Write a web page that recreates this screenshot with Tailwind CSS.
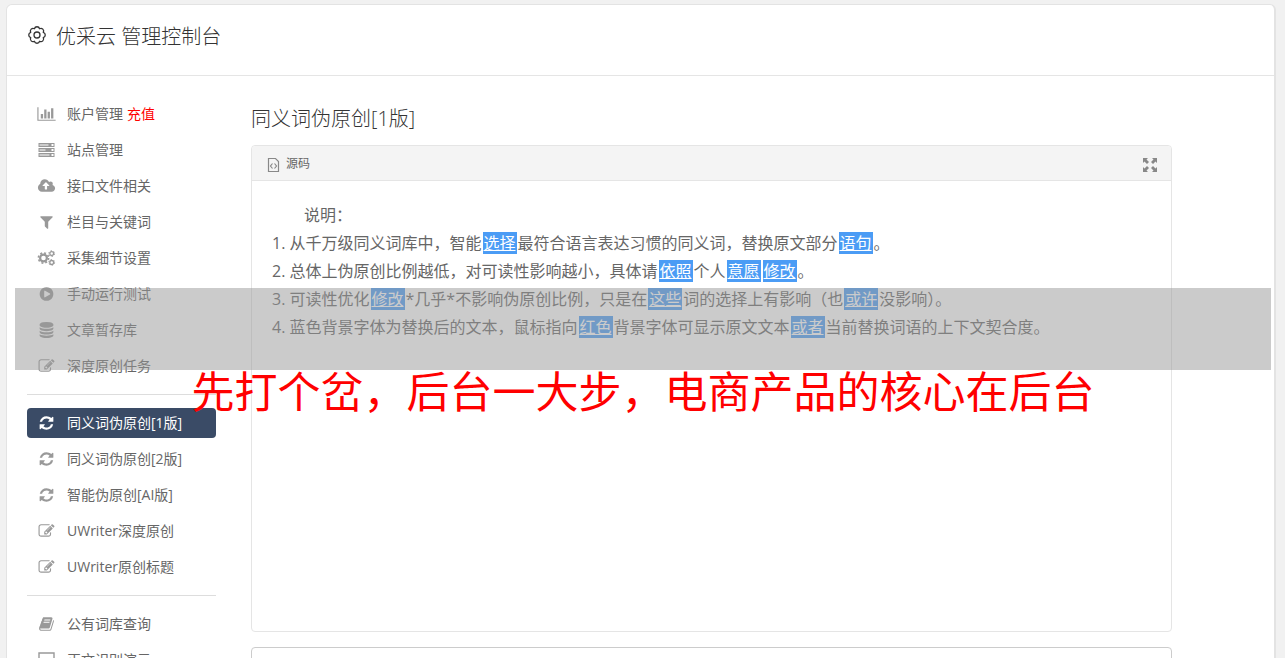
<!DOCTYPE html>
<html lang="zh-CN">

<head>
    <meta charset="utf-8">
    <title>优采云 管理控制台</title>
    <script src="https://cdn.jsdelivr.net/npm/@tailwindcss/browser@4"></script>
</head>

<body class="relative h-screen overflow-hidden bg-[#f1f1f1] px-[6px] pt-1 font-['Open_Sans','Noto_Sans_CJK_SC',sans-serif] text-[#666]">

    <!-- icon sprites -->
    <svg class="hidden">
        <symbol id="chart" viewBox="0 0 2048 1792"><path d="M640 896v512h-256v-512h256zm384-512v1024h-256v-1024h256zm1024 1152v128h-2048v-1536h128v1408h1920zm-640-896v768h-256v-768h256zm384-384v1152h-256v-1152h256z"/></symbol>
        <symbol id="server" viewBox="0 0 18 16"><path fill-rule="evenodd" d="M1 1h16v4H1zM2 2.600v.8h9v-.8zM14 2v2h2v-2zM1 6h16v4H1zM2 7.600v.8h6v-.8zM14 7v2h2v-2zM1 11h16v4H1zM2 12.600v.8h10v-.8zM14 12v2h2v-2z"/></symbol>
        <symbol id="upload" viewBox="-64 0 1920 1792"><path d="M1216 864q0-14-9-23l-352-352q-9-9-23-9t-23 9l-351 351q-10 12-10 24 0 14 9 23t23 9h224v352q0 13 9.5 22.5t22.5 9.5h192q13 0 22.5-9.5t9.5-22.5v-352h224q13 0 22.5-9.5t9.5-22.5zm640 288q0 159-112.5 271.5t-271.5 112.5h-1088q-185 0-316.5-131.5t-131.5-316.5q0-130 70-240t188-165q-2-30-2-43 0-212 150-362t362-150q156 0 285.5 87t188.5 231q71-62 166-62 106 0 181 75t75 181q0 76-41 138 130 31 213.5 135.5t83.5 238.5z"/></symbol>
        <symbol id="filter" viewBox="0 0 1792 1792"><path d="M1595 295q17 41-14 70l-493 493v742q0 42-39 59-13 5-25 5-27 0-45-19l-256-256q-19-19-19-45v-486l-493-493q-31-29-14-70 17-39 59-39h1280q42 0 59 39z"/></symbol>
        <symbol id="cogs" viewBox="0 0 18 16">
            <g fill="none" stroke="currentColor">
                <circle cx="6" cy="8" r="3.4" stroke-width="2.2"/>
                <circle cx="6" cy="8" r="5.1" stroke-width="1.6" stroke-dasharray="2 2.005"/>
                <circle cx="14.2" cy="3.6" r="1.9" stroke-width="1.3"/>
                <circle cx="14.2" cy="3.6" r="2.9" stroke-width="1" stroke-dasharray="1.5 1.537"/>
                <circle cx="14.2" cy="12.4" r="1.9" stroke-width="1.3"/>
                <circle cx="14.2" cy="12.4" r="2.9" stroke-width="1" stroke-dasharray="1.5 1.537"/>
            </g>
        </symbol>
        <symbol id="play" viewBox="0 0 1792 1792"><path d="M896 128q209 0 385.5 103t279.5 279.5 103 385.5-103 385.5-279.5 279.5-385.5 103-385.5-103-279.5-279.5-103-385.5 103-385.5 279.5-279.5 385.5-103zm384 823q32-18 32-55t-32-55l-544-320q-31-19-64-1-32 19-32 56v640q0 37 32 56 16 8 32 8 17 0 32-9z"/></symbol>
        <symbol id="database" viewBox="0 0 1792 1792"><path d="M896 768q237 0 443-43t325-127v170q0 69-103 128t-280 93.5-385 34.5-385-34.5-280-93.5-103-128v-170q119 84 325 127t443 43zm0 768q237 0 443-43t325-127v170q0 69-103 128t-280 93.5-385 34.5-385-34.5-280-93.5-103-128v-170q119 84 325 127t443 43zm0-384q237 0 443-43t325-127v170q0 69-103 128t-280 93.5-385 34.5-385-34.5-280-93.5-103-128v-170q119 84 325 127t443 43zm0-1152q208 0 385 34.5t280 93.5 103 128v128q0 69-103 128t-280 93.5-385 34.5-385-34.5-280-93.5-103-128v-128q0-69 103-128t280-93.5 385-34.5z"/></symbol>
        <symbol id="edit" viewBox="0 0 1792 1792"><path d="M888 1184l116-116-152-152-116 116v56h96v96h56zm440-720q-16-16-33 1l-350 350q-17 17-1 33t33-1l350-350q17-17 1-33zm80 594v190q0 119-84.5 203.5t-203.5 84.5h-832q-119 0-203.5-84.5t-84.5-203.5v-832q0-119 84.5-203.5t203.5-84.5h832q63 0 117 25 15 7 18 23 3 17-9 29l-49 49q-14 14-32 8-23-6-45-6h-832q-66 0-113 47t-47 113v832q0 66 47 113t113 47h832q66 0 113-47t47-113v-126q0-13 9-22l64-64q15-15 35-7t20 29zm-96-738l288 288-672 672h-288v-288zm444 132l-92 92-288-288 92-92q28-28 68-28t68 28l152 152q28 28 28 68t-28 68z"/></symbol>
        <symbol id="refresh" viewBox="0 0 1792 1792"><path d="M1639 1056q0 5-1 7-64 268-268 434.5t-478 166.5q-146 0-282.5-55t-243.5-157l-129 129q-19 19-45 19t-45-19-19-45v-448q0-26 19-45t45-19h448q26 0 45 19t19 45-19 45l-137 137q71 66 161 102t187 36q134 0 250-65t186-179q11-17 53-117 8-23 30-23h192q13 0 22.5 9.5t9.5 22.5zm25-800v448q0 26-19 45t-45 19h-448q-26 0-45-19t-19-45 19-45l138-138q-148-137-349-137-134 0-250 65t-186 179q-11 17-53 117-8 23-30 23h-199q-13 0-22.5-9.5t-9.5-22.5v-7q65-268 270-434.5t480-166.5q146 0 284 55.5t245 156.5l130-129q19-19 45-19t45 19 19 45z"/></symbol>
        <symbol id="book" viewBox="0 0 1792 1792"><path d="M1703 478q40 57 18 129l-275 906q-19 64-76.5 107.5t-122.5 43.5h-923q-77 0-148.5-53.5t-99.5-131.5q-24-67-2-127 0-4 3-27t4-37q1-8-3-21.5t-3-19.5q2-11 8-21t16.5-23.5 16.5-23.5q23-38 45-91.5t30-91.5q3-10 .5-30t-.5-28q3-11 17-28t17-23q21-36 42-92t25-90q1-9-2.5-32t.5-28q4-13 22-30.5t22-22.5q19-26 42.5-84.5t27.5-96.5q1-8-3-25.5t-2-26.5q2-8 9-18t18-23 17-21q8-12 16.5-30.5t15-35 16-36 19.5-32 26.5-23.5 36-11.5 47.5 5.5l-1 3q38-9 51-9h761q74 0 114 56t18 130l-274 906q-36 119-71.5 153.5t-128.5 34.5h-869q-27 0-38 15-11 16-1 43 24 70 144 70h923q29 0 56-15.5t35-41.5l300-987q7-22 5-57 38 15 59 43zm-1064 2q-4 13 2 22.5t20 9.5h608q13 0 25.5-9.5t16.5-22.5l21-64q4-13-2-22.5t-20-9.5h-608q-13 0-25.5 9.5t-16.5 22.5zm-83 256q-4 13 2 22.5t20 9.5h608q13 0 25.5-9.5t16.5-22.5l21-64q4-13-2-22.5t-20-9.5h-608q-13 0-25.5 9.5t-16.5 22.5z"/></symbol>
        <symbol id="laptop" viewBox="0 0 18 16"><path fill="none" stroke="currentColor" stroke-width="1.4" d="M1.5 1h15v10.500h-15zM0 14.500h18"/></symbol>
    </svg>

    <div class="mr-[3px] rounded-t-md border border-r-2 border-[#e3e3e3] bg-white">
        <header class="flex h-[71px] items-start gap-[9px] border-b border-[#e5e5e5] pt-4 pl-5 font-light">
            <svg class="mt-1 size-5 text-[#333]" viewBox="0 0 20 20" fill="none" stroke="currentColor" stroke-width="1.3">
                <path stroke-linejoin="round" d="M16.280 7.400A2.700 2.700 0 0 1 16.280 12.600A2.700 2.700 0 0 1 12.600 16.280A2.700 2.700 0 0 1 7.400 16.280A2.700 2.700 0 0 1 3.720 12.600A2.700 2.700 0 0 1 3.720 7.400A2.700 2.700 0 0 1 7.400 3.720A2.700 2.700 0 0 1 12.600 3.720A2.700 2.700 0 0 1 16.280 7.400Z"/>
                <circle cx="10" cy="10" r="3"/>
            </svg>
            <h1 class="text-xl leading-8 text-[#333]">优采云 管理控制台</h1>
        </header>

        <div class="flex">
            <nav class="w-[209px] shrink-0 pt-[23px] pl-5 text-sm">
                <ul class="flex flex-col gap-[6px]">
                    <li class="flex h-[30px] items-center"><a href="#" class="flex items-center"><svg class="ml-[10px] mr-[11px] h-4 w-[19px] fill-[#999]"><use href="#chart"/></svg>账户管理</a><a href="#" class="ml-1 text-[#f00]">充值</a></li>
                    <li><a href="#" class="flex h-[30px] items-center"><svg class="ml-[10px] mr-[11px] h-4 w-[19px] fill-[#999]"><use href="#server"/></svg>站点管理</a></li>
                    <li><a href="#" class="flex h-[30px] items-center"><svg class="ml-[10px] mr-[11px] h-4 w-[19px] fill-[#999]"><use href="#upload"/></svg>接口文件相关</a></li>
                    <li><a href="#" class="flex h-[30px] items-center"><svg class="ml-[10px] mr-[11px] h-4 w-[19px] fill-[#999]"><use href="#filter"/></svg>栏目与关键词</a></li>
                    <li><a href="#" class="flex h-[30px] items-center"><svg class="ml-[10px] mr-[11px] h-4 w-[19px] text-[#999]"><use href="#cogs"/></svg>采集细节设置</a></li>
                    <li><a href="#" class="flex h-[30px] items-center"><svg class="ml-[10px] mr-[11px] h-4 w-[19px] fill-[#999]"><use href="#play"/></svg>手动运行测试</a></li>
                    <li><a href="#" class="flex h-[30px] items-center"><svg class="ml-[10px] mr-[11px] h-4 w-[19px] fill-[#999]"><use href="#database"/></svg>文章暂存库</a></li>
                    <li><a href="#" class="flex h-[30px] items-center"><svg class="ml-[10px] mr-[11px] h-4 w-[19px] fill-[#999]"><use href="#edit"/></svg>深度原创任务</a></li>
                </ul>
                <hr class="my-[13px] border-[#ddd]">
                <ul class="flex flex-col gap-[6px]">
                    <li><a href="#" class="flex h-[30px] items-center rounded bg-[#3a4b66] text-white"><svg class="ml-[10px] mr-[11px] h-4 w-[19px] fill-white"><use href="#refresh"/></svg>同义词伪原创[1版]</a></li>
                    <li><a href="#" class="flex h-[30px] items-center"><svg class="ml-[10px] mr-[11px] h-4 w-[19px] fill-[#999]"><use href="#refresh"/></svg>同义词伪原创[2版]</a></li>
                    <li><a href="#" class="flex h-[30px] items-center"><svg class="ml-[10px] mr-[11px] h-4 w-[19px] fill-[#999]"><use href="#refresh"/></svg>智能伪原创[AI版]</a></li>
                    <li><a href="#" class="flex h-[30px] items-center"><svg class="ml-[10px] mr-[11px] h-4 w-[19px] fill-[#999]"><use href="#edit"/></svg>UWriter深度原创</a></li>
                    <li><a href="#" class="flex h-[30px] items-center"><svg class="ml-[10px] mr-[11px] h-4 w-[19px] fill-[#999]"><use href="#edit"/></svg>UWriter原创标题</a></li>
                </ul>
                <hr class="my-[13px] border-[#ddd]">
                <ul class="flex flex-col gap-[6px]">
                    <li><a href="#" class="flex h-[30px] items-center"><svg class="ml-[10px] mr-[11px] h-4 w-[19px] fill-[#999]"><use href="#book"/></svg>公有词库查询</a></li>
                    <li><a href="#" class="flex h-[30px] items-center"><svg class="ml-[10px] mr-[11px] h-4 w-[19px] text-[#999]"><use href="#laptop"/></svg>正文识别演示</a></li>
                </ul>
            </nav>

            <main class="ml-[35px] flex-1 pt-7">
                <div class="w-9/10">
                    <h2 class="text-xl leading-[30px] font-light text-[#333]">同义词伪原创[1版]</h2>
                    <section class="mt-[11px] rounded border border-[#e5e5e5]">
                        <div class="flex h-[35px] items-center justify-between rounded-t border-b border-[#e5e5e5] bg-[#f4f4f4] px-[14px] text-xs">
                            <button type="button" class="flex items-center gap-[5px] pt-px">
                                <svg class="mt-[2px] h-4 w-[15px] text-[#888]" viewBox="0 0 15 16" fill="none" stroke="currentColor" stroke-width="1.2">
                                    <path d="M2.500 1.500h7l3 3v10h-10zM6.500 6.500l-2 2.500 2 2.500M8.500 6.500l2 2.500-2 2.500"/>
                                </svg>
                                源码
                            </button>
                            <button type="button" aria-label="全屏" class="mt-1">
                                <svg class="size-[14px] fill-[#888]" viewBox="0 0 14 14">
                                    <path d="M0 0h5L3.500 1.500 6 4 4 6 1.500 3.500 0 5zM14 0v5l-1.500-1.500L10 6 8 4l2.500-2.500L9 0zM0 14V9l1.500 1.500L4 8l2 2-2.500 2.500L5 14zM14 14H9l1.500-1.500L8 10l2-2 2.500 2.500L14 9z"/>
                                </svg>
                            </button>
                        </div>
                        <div class="h-[450px] px-5 pt-5 text-base leading-7">
                            <p class="indent-8">说明：</p>
                            <ol>
                                <li>1. 从千万级同义词库中，智能<u class="mx-px bg-[#4b9cf5] px-px text-white">选择</u>最符合语言表达习惯的同义词，替换原文部分<u class="mx-px bg-[#4b9cf5] px-px text-white">语句</u>。</li>
                                <li>2. 总体上伪原创比例越低，对可读性影响越小，具体请<u class="mx-px bg-[#4b9cf5] px-px text-white">依照</u>个人<u class="mx-px bg-[#4b9cf5] px-px text-white">意愿</u><u class="mx-px bg-[#4b9cf5] px-px text-white">修改</u>。</li>
                                <li>3. 可读性优化<u class="mx-px bg-[#4b9cf5] px-px text-white">修改</u>*几乎*不影响伪原创比例，只是在<u class="mx-px bg-[#4b9cf5] px-px text-white">这些</u>词的选择上有影响（也<u class="mx-px bg-[#4b9cf5] px-px text-white">或许</u>没影响）。</li>
                                <li>4. 蓝色背景字体为替换后的文本，鼠标指向<u class="mx-px bg-[#4b9cf5] px-px text-white">红色</u>背景字体可显示原文文本<u class="mx-px bg-[#4b9cf5] px-px text-white">或者</u>当前替换词语的上下文契合度。</li>
                            </ol>
                        </div>
                    </section>
                    <textarea aria-label="原文" class="mt-[15px] block h-24 w-full resize-none rounded border border-[#ccc] p-2"></textarea>
                </div>
            </main>
        </div>
    </div>

    <!-- caption over the page -->
    <div class="pointer-events-none absolute top-[288px] right-[14px] left-[15px] h-[82px] bg-[#979797]/50 pt-[72px] text-center text-[43px] leading-[64px] whitespace-nowrap text-[#f00]">先打个岔，后台一大步，电商产品的核心在后台</div>
</body>

</html>
